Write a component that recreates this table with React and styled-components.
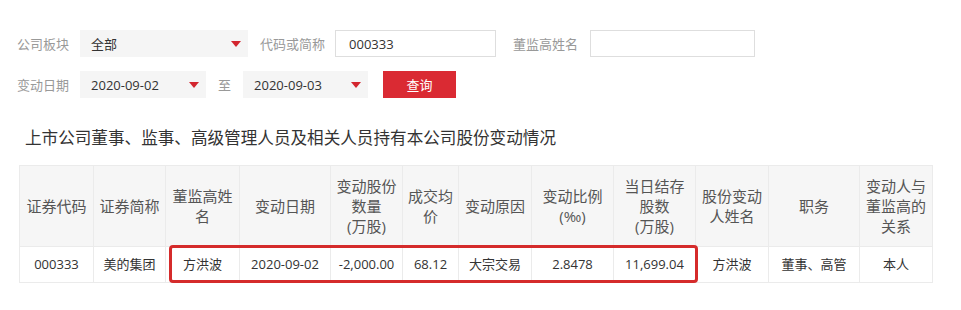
import React from 'react'
import styled, { createGlobalStyle } from 'styled-components'

const GlobalStyle = createGlobalStyle`
  body {
    margin: 0;
    background: #fff;
    font-family: 'Open Sans', 'Noto Sans CJK SC', sans-serif;
  }
`

const columns = [
  { title: '证券代码', width: 74 },
  { title: '证券简称', width: 72 },
  { title: '董监高姓\n名', width: 74 },
  { title: '变动日期', width: 91 },
  { title: '变动股份\n数量\n(万股)', width: 72 },
  { title: '成交均\n价', width: 56 },
  { title: '变动原因', width: 73 },
  { title: '变动比例\n(‰)', width: 82 },
  { title: '当日结存\n股数\n(万股)', width: 82 },
  { title: '股份变动\n人姓名', width: 73 },
  { title: '职务', width: 91 },
  { title: '变动人与\n董监高的\n关系', width: 73 },
]

const rows = [
  [
    '000333',
    '美的集团',
    '方洪波',
    '2020-09-02',
    '-2,000.00',
    '68.12',
    '大宗交易',
    '2.8478',
    '11,699.04',
    '方洪波',
    '董事、高管',
    '本人',
  ],
]

const Page = styled.div`
  padding: 30px 0 0 17px;
`

const FilterRow = styled.div`
  display: flex;
  align-items: center;
  height: 27px;

  & + & {
    margin-top: 14px;
  }
`

const Label = styled.span`
  margin-left: ${(p) => p.$offset || 0}px;
  margin-right: ${(p) => p.$gap || 11}px;
  font-size: 13px;
  color: #999;
  white-space: nowrap;
`

const Select = styled.div`
  display: flex;
  align-items: center;
  justify-content: space-between;
  box-sizing: border-box;
  width: ${(p) => p.$width}px;
  height: 100%;
  padding: 0 7px 0 11px;
  background: #f5f5f5;
  font-size: 13px;
  color: #333;
`

const Arrow = styled.span`
  width: 0;
  height: 0;
  border-left: 5px solid transparent;
  border-right: 5px solid transparent;
  border-top: 6px solid #d3262f;
`

const Input = styled.div`
  display: flex;
  align-items: center;
  box-sizing: border-box;
  width: ${(p) => p.$width}px;
  height: 100%;
  padding-left: 13px;
  border: 1px solid #dedede;
  font-size: 13px;
  color: #333;
`

const Button = styled.button`
  width: 73px;
  height: 100%;
  margin-left: 15px;
  border: none;
  background: #da2a33;
  color: #fff;
  font-family: inherit;
  font-size: 13px;
`

const Title = styled.h2`
  margin: 28px 0 15px 8px;
  font-size: 16.6px;
  line-height: 24px;
  font-weight: normal;
  color: #333;
`

const TableWrap = styled.div`
  position: relative;
  width: 913px;
  margin-left: 2px;
`

const Table = styled.table`
  width: 913px;
  border-collapse: collapse;
  table-layout: fixed;
  border: 1px solid #ebebeb;
`

const Col = styled.col`
  width: ${(p) => p.$width}px;
`

const Th = styled.th`
  padding: 10px 4px;
  border: 1px solid #ebebeb;
  background: #f6f6f6;
  font-size: 15px;
  line-height: 20px;
  font-weight: normal;
  color: #555;
  white-space: pre-line;
`

const Td = styled.td`
  padding: 8px 4px;
  border: 1px solid #ebebeb;
  font-size: 13px;
  line-height: 19px;
  text-align: center;
  color: #333;
  white-space: nowrap;
`

const Highlight = styled.div`
  position: absolute;
  left: 150px;
  top: 80px;
  width: 529px;
  height: 38px;
  box-sizing: border-box;
  border: 3px solid #d52b2b;
  border-radius: 4px;
  pointer-events: none;
`

const App = () => {
  return (
    <Page>
      <GlobalStyle />

      <FilterRow>
        <Label>公司板块</Label>
        <Select $width={168}>
          全部
          <Arrow />
        </Select>
        <Label $offset={12} $gap={10}>
          代码或简称
        </Label>
        <Input $width={161}>000333</Input>
        <Label $offset={17} $gap={12}>
          董监高姓名
        </Label>
        <Input $width={165} />
      </FilterRow>

      <FilterRow>
        <Label>变动日期</Label>
        <Select $width={126}>
          2020-09-02
          <Arrow />
        </Select>
        <Label $offset={12} $gap={12}>
          至
        </Label>
        <Select $width={125}>
          2020-09-03
          <Arrow />
        </Select>
        <Button>查询</Button>
      </FilterRow>

      <Title>上市公司董事、监事、高级管理人员及相关人员持有本公司股份变动情况</Title>

      <TableWrap>
        <Table>
          <colgroup>
            {columns.map((c) => (
              <Col key={c.title} $width={c.width} />
            ))}
          </colgroup>
          <thead>
            <tr>
              {columns.map((c) => (
                <Th key={c.title}>{c.title}</Th>
              ))}
            </tr>
          </thead>
          <tbody>
            {rows.map((row, i) => (
              <tr key={i}>
                {row.map((cell, j) => (
                  <Td key={j}>{cell}</Td>
                ))}
              </tr>
            ))}
          </tbody>
        </Table>
        <Highlight />
      </TableWrap>
    </Page>
  )
}

export default App
